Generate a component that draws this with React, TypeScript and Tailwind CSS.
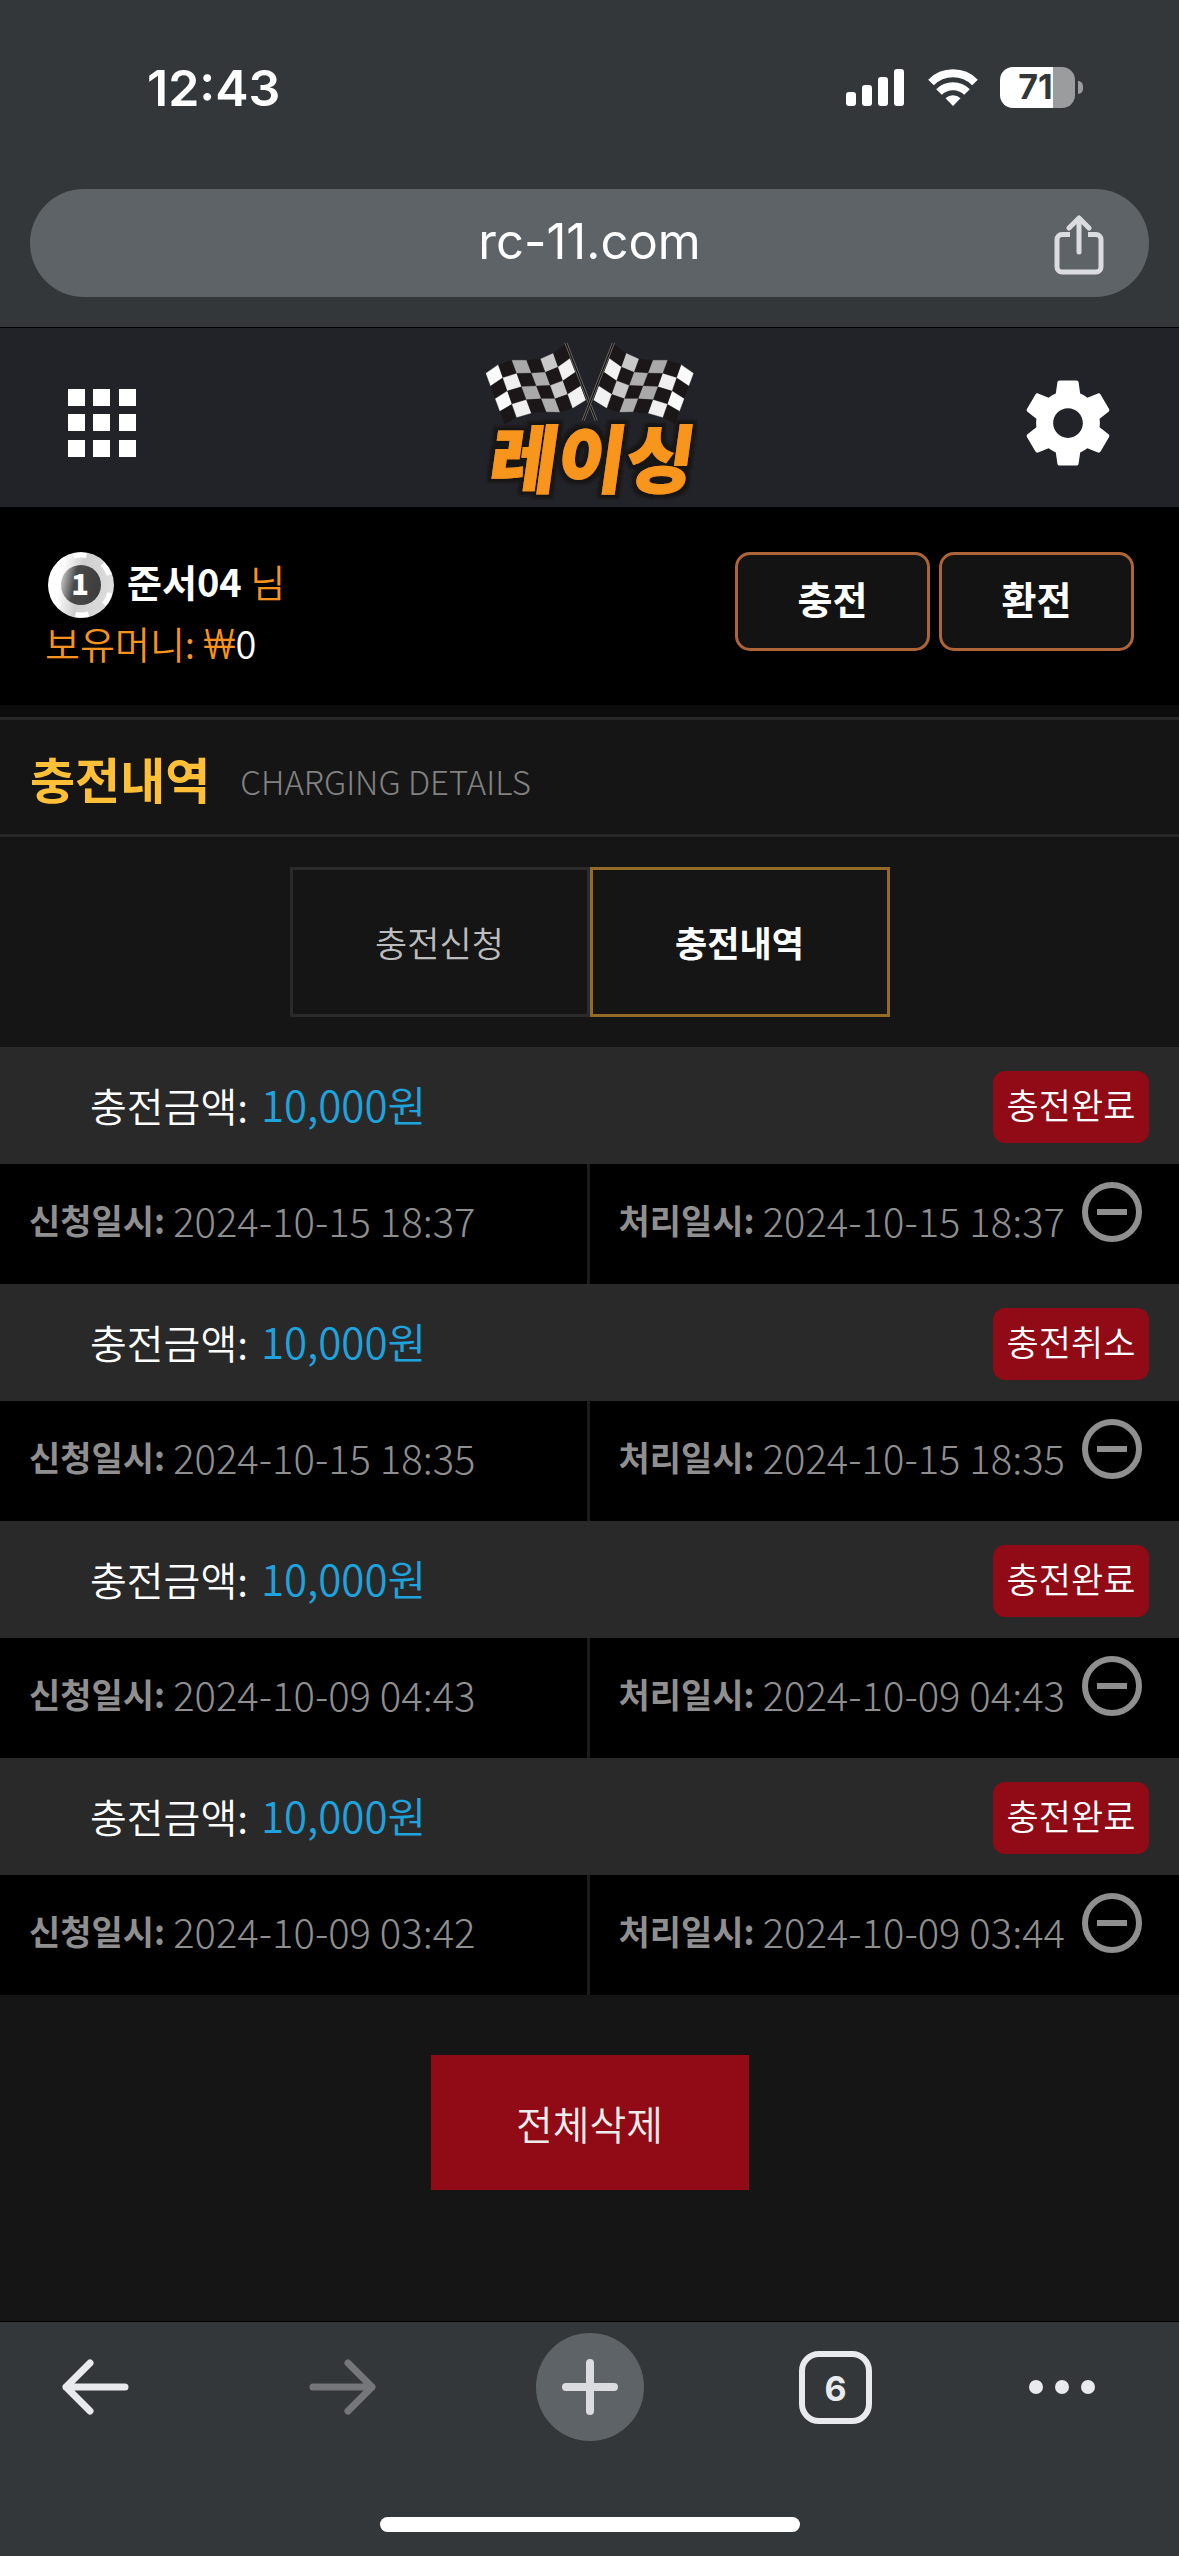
import React from "react";

type Charge = {
  amount: string;
  status: string;
  requestedAt: string;
  processedAt: string;
};

const charges: Charge[] = [
  { amount: "10,000원", status: "충전완료", requestedAt: "2024-10-15 18:37", processedAt: "2024-10-15 18:37" },
  { amount: "10,000원", status: "충전취소", requestedAt: "2024-10-15 18:35", processedAt: "2024-10-15 18:35" },
  { amount: "10,000원", status: "충전완료", requestedAt: "2024-10-09 04:43", processedAt: "2024-10-09 04:43" },
  { amount: "10,000원", status: "충전완료", requestedAt: "2024-10-09 03:42", processedAt: "2024-10-09 03:44" },
];

function StatusBar() {
  return (
    <div className="flex h-[174px] items-center justify-between pl-[147px] pr-24 font-['Inter',sans-serif] text-white">
      <span className="pt-0.5 text-[50px] font-semibold leading-none">12:43</span>
      <div className="flex items-center gap-[22px]">
        <svg width="60" height="38" viewBox="0 0 60 38" fill="currentColor" aria-label="신호">
          <rect x="0" y="24" width="10" height="14" rx="3" />
          <rect x="16" y="17" width="10" height="21" rx="3" />
          <rect x="32" y="9" width="10" height="29" rx="3" />
          <rect x="48" y="1" width="10" height="37" rx="3" />
        </svg>
        <svg width="50" height="38" viewBox="0 0 50 38" fill="none" stroke="currentColor" aria-label="와이파이">
          <path d="M3 14.500a31 31 0 0 1 44 0" strokeWidth="8" />
          <path d="M11 24a20 20 0 0 1 28 0" strokeWidth="8" />
          <path d="M25 38l-7.500-7.800a11 11 0 0 1 15 0z" fill="currentColor" stroke="none" />
        </svg>
        <div className="flex items-center gap-[3px]">
          <div className="flex h-[41px] w-[75px] items-center justify-center rounded-[13px] bg-[linear-gradient(90deg,#fff_71%,#9b9c9e_71%)] pr-1 text-[34px] font-bold leading-none text-[#33373a]">
            71
          </div>
          <div className="h-[13px] w-[5px] rounded-r-full bg-[#9b9c9e]" />
        </div>
      </div>
    </div>
  );
}

function AddressBar() {
  return (
    <div className="px-[30px] pb-[30px] pt-[15px]">
      <div className="grid h-[108px] grid-cols-[1fr_auto_1fr] items-center rounded-full bg-[#5e6367] px-[45px]">
        <span />
        <button className="pb-1 font-['Inter',sans-serif] text-[49px] leading-none text-white">rc-11.com</button>
        <button className="justify-self-end pt-1 text-[#dadce0]" aria-label="공유">
          <svg width="50" height="60" viewBox="0 0 50 60" fill="none" stroke="currentColor" strokeWidth="5" strokeLinecap="round" strokeLinejoin="round">
            <path d="M16 19.500H8a5 5 0 0 0-5 5V52a5 5 0 0 0 5 5h34a5 5 0 0 0 5-5V24.500a5 5 0 0 0-5-5h-8" strokeLinecap="butt" />
            <path d="M25 37V4M15 13L25 3l10 10" />
          </svg>
        </button>
      </div>
    </div>
  );
}

const flagTop = [[48, 130], [85, 104], [126, 91], [170, 91], [212, 87], [250, 70], [287, 42]];
const flagBottom = [[104, 282], [140, 262], [184, 249], [229, 245], [270, 246], [308, 234], [347, 210]];
const flagShades = ["#fbfbfb", "#f0f0f0", "#a9a9a9", "#adadad", "#c9c9c9", "#f2f2f2"];

function meshPoint(col: number, row: number) {
  const t = row / 4;
  const [x1, y1] = flagTop[col];
  const [x2, y2] = flagBottom[col];
  return `${x1 + (x2 - x1) * t},${y1 + (y2 - y1) * t}`;
}

function Flag() {
  return (
    <g>
      {[0, 1, 2, 3, 4, 5].map((c) =>
        [0, 1, 2, 3].map((r) => (
          <polygon
            key={`${c}-${r}`}
            points={[meshPoint(c, r), meshPoint(c + 1, r), meshPoint(c + 1, r + 1), meshPoint(c, r + 1)].join(" ")}
            fill={(c + r) % 2 === 0 ? flagShades[c] : "#1b1718"}
            stroke={(c + r) % 2 === 0 ? flagShades[c] : "#1b1718"}
            strokeWidth="1"
          />
        ))
      )}
      <path d="M287 38L379 274" stroke="#171415" strokeWidth="11" />
      <path d="M284 38L376 274M291 38L382 272" stroke="#96928a" strokeWidth="2" />
    </g>
  );
}

function Logo() {
  return (
    <svg width="240" height="175" viewBox="0 0 720 525" aria-label="레이싱" className="overflow-visible">
      <defs>
        <filter id="logo-outline" x="-10%" y="-10%" width="120%" height="120%">
          <feMorphology in="SourceAlpha" operator="dilate" radius="13" result="grown" />
          <feGaussianBlur in="grown" stdDeviation="3" result="soft" />
          <feFlood floodColor="#191516" />
          <feComposite in2="soft" operator="in" result="outline" />
          <feMerge>
            <feMergeNode in="outline" />
            <feMergeNode in="SourceGraphic" />
          </feMerge>
        </filter>
      </defs>
      <Flag />
      <g transform="translate(718 0) scale(-1 1)">
        <Flag />
      </g>
      <g filter="url(#logo-outline)">
        <text
          x="422"
          y="470"
          textAnchor="middle"
          fontSize="222"
          fill="#f8951d"
          stroke="#f8951d"
          strokeWidth="3"
          transform="skewX(-8)"
          className="font-['Noto_Sans_CJK_KR',sans-serif] font-black"
        >
          레이싱
        </text>
      </g>
    </svg>
  );
}

function SiteHeader() {
  return (
    <header className="grid h-[180px] grid-cols-[1fr_auto_1fr] items-center border-t border-black bg-[#222328] px-[60px]">
      <button className="justify-self-start pl-2 pt-[11px]" aria-label="메뉴">
        <svg width="68" height="68" viewBox="0 0 68 68" fill="#fff">
          {[0, 25, 51].map((x) => [0, 25, 51].map((y) => <rect key={`${x}-${y}`} x={x} y={y} width="17" height="17" />))}
        </svg>
      </button>
      <a href="#home" aria-label="홈">
        <Logo />
      </a>
      <button className="justify-self-end pt-[11px]" aria-label="설정">
        <svg width="102" height="102" viewBox="0 0 24 24" fill="#fff">
          <path d="M19.430 12.980c.04-.32.07-.64.07-.98s-.03-.66-.07-.98l2.110-1.650c.19-.15.24-.42.12-.64l-2-3.460c-.12-.22-.39-.3-.61-.22l-2.490 1c-.52-.4-1.080-.73-1.690-.98l-.38-2.650C14.460 2.180 14.250 2 14 2h-4c-.25 0-.46.18-.49.42l-.38 2.650c-.61.25-1.170.59-1.690.98l-2.490-1c-.23-.09-.49 0-.61.22l-2 3.460c-.13.22-.07.49.12.64l2.110 1.650c-.04.32-.07.65-.07.98s.03.66.07.98l-2.110 1.650c-.19.15-.24.42-.12.64l2 3.460c.12.22.39.3.61.22l2.490-1c.52.4 1.080.73 1.690.98l.38 2.650c.03.24.24.42.49.42h4c.25 0 .46-.18.49-.42l.38-2.650c.61-.25 1.170-.59 1.690-.98l2.490 1c.23.09.49 0 .61-.22l2-3.460c.12-.22.07-.49-.12-.64l-2.110-1.650zM12 15.500c-1.930 0-3.500-1.570-3.500-3.500s1.570-3.500 3.500-3.500 3.500 1.570 3.500 3.500-1.570 3.500-3.500 3.500z" />
        </svg>
      </button>
    </header>
  );
}

function LevelChip() {
  return (
    <svg width="66" height="66" viewBox="0 0 66 66" aria-label="레벨 1">
      <defs>
        <linearGradient id="chip-rim" x1="0" y1="0" x2="1" y2="0.2">
          <stop offset="0.25" stopColor="#fff" />
          <stop offset="0.55" stopColor="#cfcfcf" />
          <stop offset="1" stopColor="#dcdcdc" />
        </linearGradient>
        <linearGradient id="chip-core" x1="0" y1="0.3" x2="1" y2="0.5">
          <stop offset="0" stopColor="#c8c8c8" />
          <stop offset="0.35" stopColor="#4a4a4a" />
          <stop offset="1" stopColor="#3c3c3c" />
        </linearGradient>
      </defs>
      <circle cx="33" cy="33" r="33" fill="url(#chip-rim)" />
      <circle cx="33" cy="33" r="30" fill="none" stroke="#fff" strokeWidth="5" strokeDasharray="13 18.400" strokeDashoffset="-8" />
      <circle cx="33" cy="33" r="20" fill="url(#chip-core)" />
      <text x="32" y="43" textAnchor="middle" fontSize="29" fill="#fff" className="font-['Noto_Sans_CJK_KR',sans-serif] font-black">
        1
      </text>
    </svg>
  );
}

function WalletButton({ children }: { children: React.ReactNode }) {
  return (
    <button className="h-[99px] w-[195px] rounded-[15px] border-[3px] border-[#ae6437] bg-[#131313] pb-2 text-[38px] font-bold leading-none text-white">
      {children}
    </button>
  );
}

function AccountBar() {
  return (
    <section className="flex h-[198px] items-start justify-between bg-black px-[45px] pt-[45px]">
      <div className="text-[38px] font-[350] text-[#f7931e]">
        <div className="flex h-[66px] items-center pl-[3px]">
          <LevelChip />
          <p className="pb-2 pl-[13px] leading-none">
            <strong className="font-bold text-white">준서04</strong> 님
          </p>
        </div>
        <p className="leading-[50px]">
          보유머니: <span className="font-['Roboto',sans-serif] text-[42px] font-light">₩</span>
          <span className="text-white">0</span>
        </p>
      </div>
      <div className="flex gap-[9px]">
        <WalletButton>충전</WalletButton>
        <WalletButton>환전</WalletButton>
      </div>
    </section>
  );
}

function ChargeItem({ charge }: { charge: Charge }) {
  return (
    <li>
      <div className="flex h-[117px] items-center justify-between bg-[#292929] pl-[90px] pr-[30px]">
        <p className="pb-1 text-[40px] font-[350] leading-none text-white">
          충전금액: <span className="pl-1 text-[42px] text-[#1fa3dc]">{charge.amount}</span>
        </p>
        <span className="mt-[3px] flex h-[72px] w-[156px] justify-center rounded-xl bg-[#900b16] text-[35px] font-[350] leading-[66px] text-white">
          {charge.status}
        </span>
      </div>
      <div className="grid h-[120px] grid-cols-2 bg-black text-[#8f8f8f]">
        <p className="flex items-center border-r-[3px] border-[#1c1c1c] pb-2 pl-[29px] text-[40px] font-light leading-none">
          <span className="pr-2 text-[34px] font-bold">신청일시:</span>
          {charge.requestedAt}
        </p>
        <div className="flex items-center justify-between pl-[29px] pr-[37px]">
          <p className="flex items-center pb-2 text-[40px] font-light leading-none">
            <span className="pr-2 text-[34px] font-bold">처리일시:</span>
            {charge.processedAt}
          </p>
          <button className="pb-6" aria-label="삭제">
            <svg width="60" height="60" viewBox="0 0 60 60" fill="none" stroke="currentColor" strokeWidth="6">
              <circle cx="30" cy="30" r="27" />
              <path d="M15 30h30" />
            </svg>
          </button>
        </div>
      </div>
    </li>
  );
}

function BrowserToolbar() {
  return (
    <footer className="border-t border-black bg-[#33373a]">
      <nav className="grid h-[130px] grid-cols-[248fr_227fr_263fr_229fr_151fr] items-center justify-items-start pl-[61px] text-[#e8eaed]">
        <button aria-label="뒤로">
          <svg width="68" height="56" viewBox="0 0 68 56" fill="none" stroke="currentColor" strokeWidth="7" strokeLinecap="round" strokeLinejoin="round">
            <path d="M64 28H5M29 4L5 28l24 24" />
          </svg>
        </button>
        <button aria-label="앞으로" className="text-[#757678]" disabled>
          <svg width="68" height="56" viewBox="0 0 68 56" fill="none" stroke="currentColor" strokeWidth="7" strokeLinecap="round" strokeLinejoin="round">
            <path d="M4 28h59M39 4l24 24-24 24" />
          </svg>
        </button>
        <button aria-label="새 탭" className="flex size-[108px] items-center justify-center rounded-full bg-[#5e6367] text-[#dadce0]">
          <svg width="56" height="56" viewBox="0 0 56 56" fill="none" stroke="currentColor" strokeWidth="8" strokeLinecap="round">
            <path d="M28 4v48M4 28h48" />
          </svg>
        </button>
        <button className="flex size-[73px] items-center justify-center rounded-[20px] border-[6px] border-current pt-1 font-['Inter',sans-serif] text-[34px] font-bold leading-none">
          6
        </button>
        <button aria-label="더보기">
          <svg width="68" height="16" viewBox="0 0 68 16" fill="currentColor">
            <circle cx="8" cy="8" r="7" />
            <circle cx="34" cy="8" r="7" />
            <circle cx="60" cy="8" r="7" />
          </svg>
        </button>
      </nav>
      <div className="flex justify-center pb-6 pt-[65px]">
        <div className="h-[15px] w-[420px] rounded-full bg-white" />
      </div>
    </footer>
  );
}

export default function App() {
  return (
    <div className="flex min-h-screen flex-col bg-[#151515] font-['Noto_Sans_CJK_KR',sans-serif]">
      <div className="bg-[#33373a]">
        <StatusBar />
        <AddressBar />
      </div>
      <SiteHeader />
      <AccountBar />
      <main className="flex-1 border-t-[12px] border-[#0d0d0d]">
        <div className="flex h-[120px] items-center border-y-[3px] border-[#272727] px-[30px]">
          <h1 className="text-[49px] font-bold leading-none text-[#ffc038]">충전내역</h1>
          <span className="pl-[30px] pt-2 text-[33px] font-light leading-none text-[#828282]">CHARGING DETAILS</span>
        </div>
        <div className="flex justify-center py-[30px] text-[35px] leading-none">
          <button className="h-[150px] w-[300px] border-[3px] border-[#2b2b2b] pb-0.5 font-[350] text-[#bdbdbd]">충전신청</button>
          <button className="h-[150px] w-[300px] border-[3px] border-[#936a26] pb-0.5 font-bold text-white">충전내역</button>
        </div>
        <ul>
          {charges.map((charge) => (
            <ChargeItem key={charge.requestedAt} charge={charge} />
          ))}
        </ul>
        <div className="flex justify-center py-[60px]">
          <button className="h-[135px] w-[318px] bg-[#900b16] text-[40px] font-[350] leading-none text-[#ededed]">전체삭제</button>
        </div>
      </main>
      <BrowserToolbar />
    </div>
  );
}
